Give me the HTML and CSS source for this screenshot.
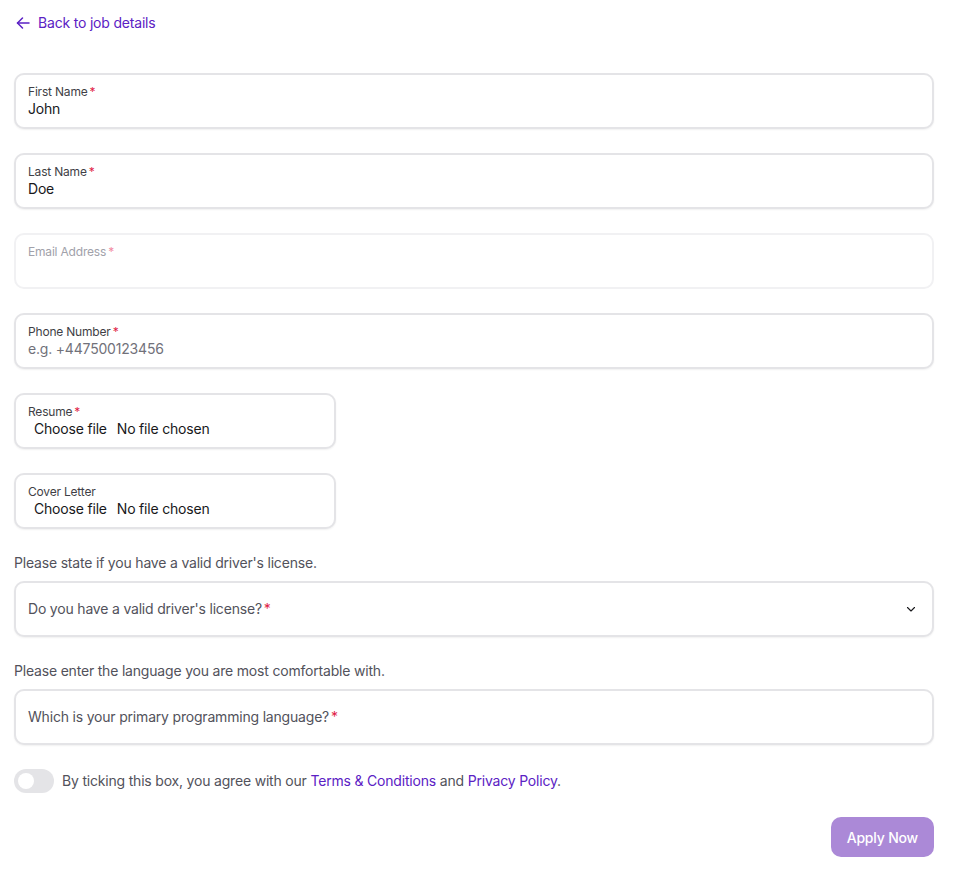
FILE: index.html
```html
<!DOCTYPE html>
<html>
<head>
    <meta charset="UTF-8">
    <meta name="viewport" content="width=device-width, initial-scale=1.0">
    <title>Apply - Job Application</title>
    <link rel="stylesheet" href="styles.css">
</head>
<body>

    <div class="page">
        <a href="#" class="back-link">
            <svg width="16" height="16" viewBox="0 0 16 16" fill="none" stroke="currentColor" stroke-width="1.5" stroke-linecap="round" stroke-linejoin="round">
                <path d="M14 8H2.5"/>
                <path d="M7.5 3L2.5 8l5 5"/>
            </svg>
            Back to job details
        </a>

        <form class="apply-form">
            <div class="field">
                <label>First Name<span class="req">*</span></label>
                <input type="text" value="John">
            </div>

            <div class="field">
                <label>Last Name<span class="req">*</span></label>
                <input type="text" value="Doe">
            </div>

            <div class="field disabled">
                <label>Email Address<span class="req">*</span></label>
                <input type="email" disabled>
            </div>

            <div class="field">
                <label>Phone Number<span class="req">*</span></label>
                <input type="tel" placeholder="e.g. +447500123456">
            </div>

            <div class="field file-field">
                <label>Resume<span class="req">*</span></label>
                <div class="file-input">
                    <span class="file-btn">Choose file</span>
                    <span>No file chosen</span>
                </div>
            </div>

            <div class="field file-field">
                <label>Cover Letter</label>
                <div class="file-input">
                    <span class="file-btn">Choose file</span>
                    <span>No file chosen</span>
                </div>
            </div>

            <div class="question">
                <p class="hint">Please state if you have a valid driver's license.</p>
                <div class="field select-field">
                    <span class="placeholder">Do you have a valid driver's license?<span class="req">*</span></span>
                    <svg class="chevron" width="10" height="6" viewBox="0 0 10 6" fill="none" stroke="#18181b" stroke-width="1.1" stroke-linecap="round" stroke-linejoin="round">
                        <path d="M1.5 1.5l3.5 3.5 3.5-3.5"/>
                    </svg>
                </div>
            </div>

            <div class="question">
                <p class="hint">Please enter the language you are most comfortable with.</p>
                <div class="field select-field">
                    <span class="placeholder">Which is your primary programming language?<span class="req">*</span></span>
                </div>
            </div>

            <div class="consent">
                <span class="toggle"><span class="knob"></span></span>
                <span>By ticking this box, you agree with our <a href="#">Terms &amp; Conditions</a> and <a href="#">Privacy Policy</a>.</span>
            </div>

            <div class="actions">
                <button type="button" class="btn-apply" disabled>Apply Now</button>
            </div>
        </form>
    </div>

</body>
</html>
```

FILE: styles.css
```css
body {
    font-family: 'Inter', 'Liberation Sans', sans-serif;
    letter-spacing: -0.012em;
    margin: 0;
    padding: 0;
    background-color: #fff;
    color: #18181b;
}

.page {
    padding: 13px 25px 13px 14px;
}

.back-link {
    display: inline-flex;
    align-items: center;
    gap: 7px;
    margin-left: 1px;
    color: #5b21c4;
    text-decoration: none;
    font-size: 14px;
    line-height: 20px;
}

.apply-form {
    margin-top: 38px;
    display: flex;
    flex-direction: column;
    gap: 24px;
}

.field {
    border: 2px solid #e4e4e7;
    border-radius: 10px;
    padding: 8px 12px;
    box-shadow: 0 1px 2px rgba(0, 0, 0, 0.06);
    display: flex;
    flex-direction: column;
    background: #fff;
}

.field label {
    font-size: 12px;
    line-height: 16px;
    padding-top: 1px;
    margin-bottom: -1px;
    color: #3f3f46;
}

.req {
    color: #e11d48;
    margin-left: 2px;
}

.field input {
    border: none;
    outline: none;
    padding: 0;
    margin: 0;
    font-family: inherit;
    letter-spacing: inherit;
    font-size: 14px;
    line-height: 20px;
    height: 20px;
    color: #18181b;
    background: transparent;
}

.field input::placeholder {
    color: #71717a;
}

.field.disabled {
    border-color: #f1f1f3;
    box-shadow: none;
}

.field.disabled label {
    color: #a1a1aa;
}

.field.disabled .req {
    color: #f28ba3;
}

.file-field {
    width: 294px;
}

.file-input {
    font-size: 14px;
    line-height: 20px;
    color: #18181b;
    display: flex;
    gap: 10px;
    padding-left: 6px;
}

.question {
    display: flex;
    flex-direction: column;
    gap: 8px;
}

.hint {
    margin: 0;
    font-size: 14px;
    line-height: 20px;
    color: #52525b;
}

.select-field {
    flex-direction: row;
    align-items: center;
    justify-content: space-between;
    height: 36px;
}

.placeholder {
    font-size: 14px;
    line-height: 20px;
    color: #52525b;
}

.chevron {
    margin-right: 4px;
}

.consent {
    display: flex;
    align-items: center;
    gap: 8px;
    font-size: 14px;
    line-height: 24px;
    color: #52525b;
}

.consent a {
    color: #5b21c4;
    text-decoration: none;
}

.toggle {
    width: 40px;
    height: 24px;
    border-radius: 12px;
    background-color: #e4e4e7;
    display: flex;
    align-items: center;
    padding: 0 4px;
    box-sizing: border-box;
}

.knob {
    width: 16px;
    height: 16px;
    border-radius: 50%;
    background: #fff;
}

.actions {
    display: flex;
    justify-content: flex-end;
}

.btn-apply {
    background-color: #ab89d7;
    color: #fff;
    border: none;
    border-radius: 10px;
    font-family: inherit;
    letter-spacing: inherit;
    font-size: 14px;
    font-weight: 500;
    height: 40px;
    padding: 0 16px;
}
```
